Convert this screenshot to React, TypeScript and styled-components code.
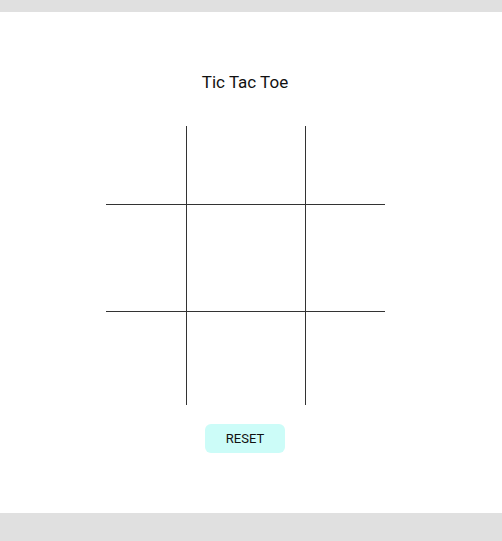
import { useState } from "react";
import styled, { createGlobalStyle } from "styled-components";

const GlobalStyle = createGlobalStyle`
  html, body {
    margin: 0;
    padding: 0;
    background-color: #e0e0e0;
    font-family: Roboto, "Liberation Sans", sans-serif;
  }
`;

const Page = styled.div`
  margin-top: 12px;
  height: 501px;
  background-color: #ffffff;
  display: flex;
  flex-direction: column;
  align-items: center;
  padding-right: 12px;
  box-sizing: border-box;
`;

const Title = styled.h1`
  margin: 58px 0 0;
  font-size: 17px;
  font-weight: 400;
  line-height: 24px;
  color: #111;
`;

const Board = styled.div`
  margin-top: 32px;
  display: grid;
  grid-template-columns: 81px 119px 79px;
  grid-template-rows: 79px 107px 93px;
`;

interface ICellProps {
  $right: boolean;
  $bottom: boolean;
}

const Cell = styled.button<ICellProps>`
  border: none;
  border-right: ${(props) => (props.$right ? "1px solid #333" : "none")};
  border-bottom: ${(props) => (props.$bottom ? "1px solid #333" : "none")};
  background: transparent;
  padding: 0;
  font-family: inherit;
  font-size: 40px;
  color: #222;
  cursor: pointer;
`;

const ResetButton = styled.button`
  margin-top: 19px;
  width: 80px;
  height: 29px;
  border: none;
  border-radius: 6px;
  background-color: #ccfcf8;
  font-family: Roboto, "Liberation Sans", sans-serif;
  font-size: 13px;
  color: #111;
  cursor: pointer;
`;

function App() {
  const [cells, setCells] = useState<string[]>(Array(9).fill(""));
  const [xTurn, setXTurn] = useState(true);

  const play = (index: number) => {
    if (cells[index]) return;
    const next = [...cells];
    next[index] = xTurn ? "X" : "O";
    setCells(next);
    setXTurn(!xTurn);
  };

  return (
    <>
      <GlobalStyle />
      <Page>
        <Title>Tic Tac Toe</Title>
        <Board>
          {cells.map((value, index) => (
            <Cell
              key={index}
              $right={index % 3 !== 2}
              $bottom={index < 6}
              onClick={() => play(index)}
            >
              {value}
            </Cell>
          ))}
        </Board>
        <ResetButton
          onClick={() => {
            setCells(Array(9).fill(""));
            setXTurn(true);
          }}
        >
          RESET
        </ResetButton>
      </Page>
    </>
  );
}

export default App;
